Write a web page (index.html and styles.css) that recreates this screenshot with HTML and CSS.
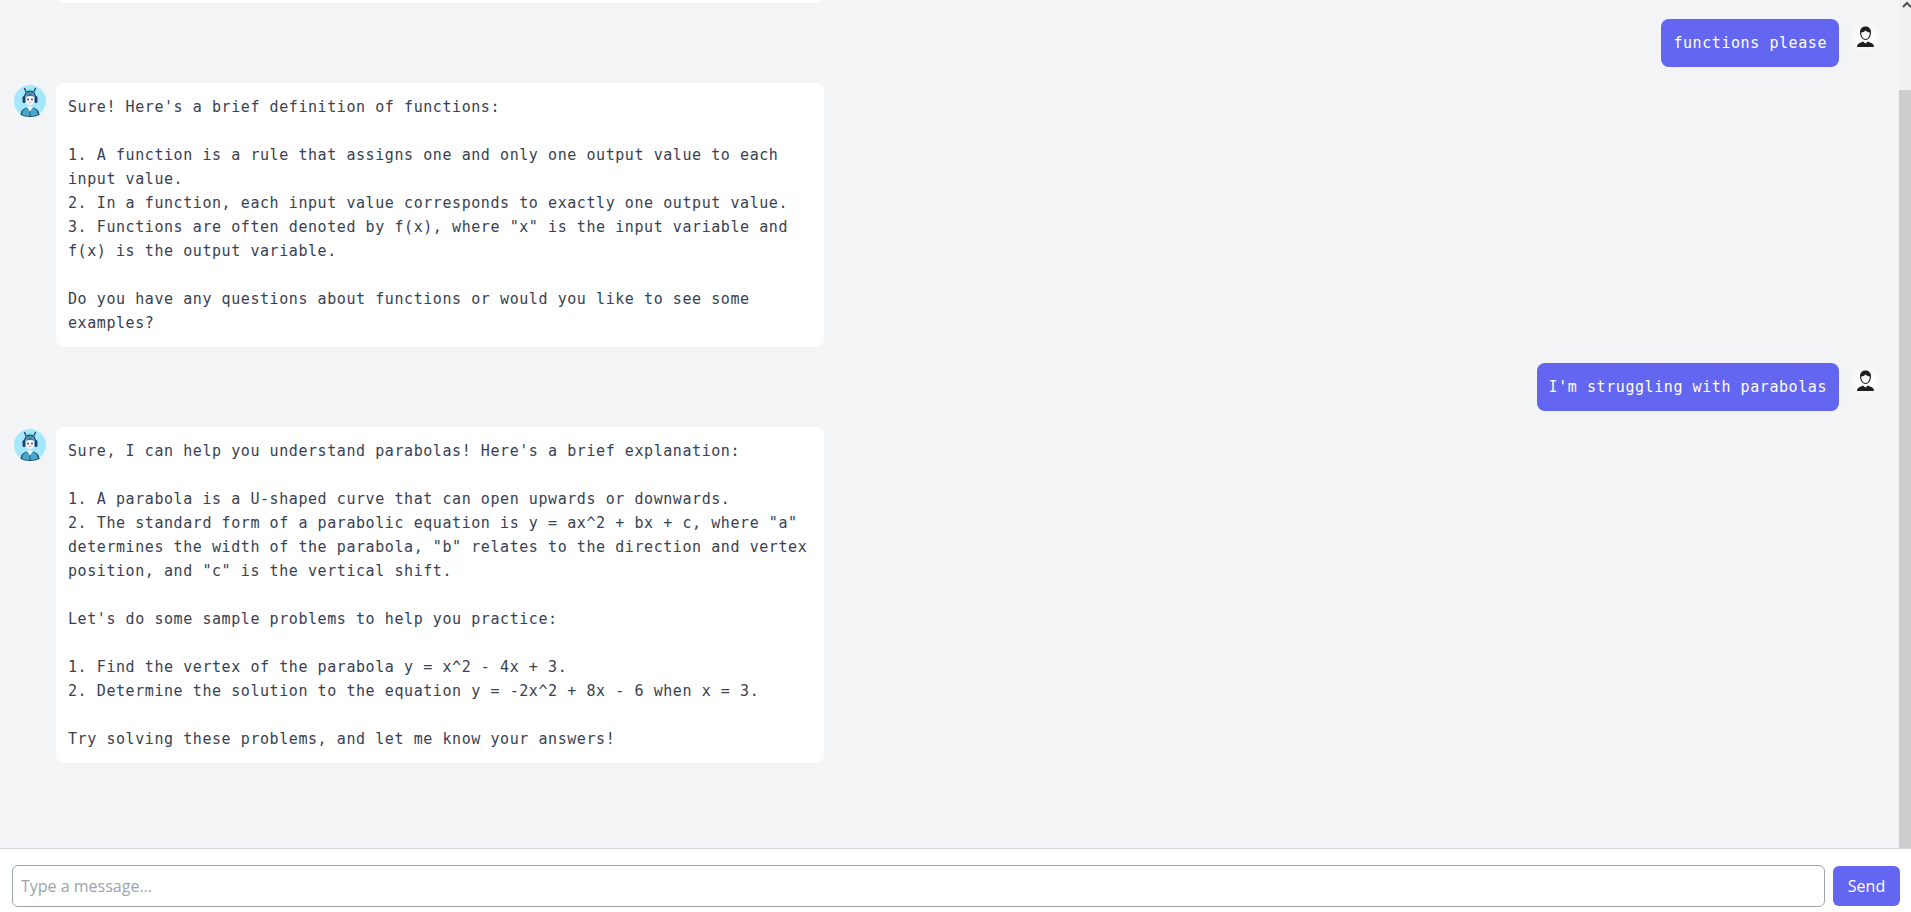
FILE: index.html
```html
<!DOCTYPE html>
<html lang="en">
<head>
    <meta charset="UTF-8">
    <meta name="viewport" content="width=device-width, initial-scale=1.0">
    <title>Chat</title>
    <link rel="stylesheet" href="styles.css">
</head>
<body>
    <svg class="defs" width="0" height="0">
        <defs>
            <radialGradient id="halo">
                <stop offset="0.6" stop-color="#fdfdfd"/>
                <stop offset="1" stop-color="#fdfdfd" stop-opacity="0"/>
            </radialGradient>
        </defs>
        <symbol id="bot" viewBox="0 0 32 32">
            <circle cx="16" cy="16" r="16" fill="#a5e8fb"/>
            <path d="M6.500 30c.3-4.500 3-7.800 9.500-7.800s9.200 3.300 9.500 7.800c-2.700 1.300-6 2-9.500 2s-6.800-.7-9.500-2z" fill="#1d4f82"/>
            <path d="M8 29.500c.5-3.500 2.500-6.200 5-6.500l3 3.500 3-3.500c2.500.3 4.500 3 5 6.500-2.400 1-5 1.500-8 1.500s-5.600-.5-8-1.500z" fill="#4aa6c4"/>
            <path d="M13 22.500l3 4 3-4-1.200-1h-3.600z" fill="#eef9fc"/>
            <path d="M16 26.500v4.500" stroke="#1d4f82" stroke-width="1"/>
            <path d="M10.500 14c-.2-5 2-7.500 5.500-7.500s5.700 2.500 5.500 7.500" fill="none" stroke="#1d3f73" stroke-width="1.500"/>
            <path d="M10.500 3l1.500 4M21.500 3L20 7" stroke="#1d3f73" stroke-width="1.300"/>
            <rect x="13" y="4.500" width="6" height="1.600" rx=".8" fill="#5fd6c4"/>
            <rect x="8.500" y="11" width="3" height="7" rx="1.500" fill="#1d3f73"/>
            <rect x="20.500" y="11" width="3" height="7" rx="1.500" fill="#1d3f73"/>
            <path d="M11.800 11.500c0-2 1.700-3.500 4.200-3.500s4.200 1.500 4.200 3.500v3.500c0 3-1.800 5-4.200 5s-4.200-2-4.200-5z" fill="#fbf5f3"/>
            <path d="M11.800 12c0-2.500 1.700-4 4.200-4s4.200 1.500 4.200 4c-2.600-1.200-5.800-1.200-8.400 0z" fill="#3a7ea8"/>
            <circle cx="14" cy="14.500" r=".9" fill="#1d3f73"/>
            <circle cx="18" cy="14.500" r=".9" fill="#1d3f73"/>
            <path d="M14.800 17.300c.8.500 1.600.5 2.400 0" fill="none" stroke="#b5657a" stroke-width=".7"/>
        </symbol>
        <symbol id="human" viewBox="0 0 32 32">
            <circle cx="16.500" cy="16" r="16" fill="url(#halo)"/>
            <path d="M8 26c0-2.500 1.500-3.500 3.500-4.200l2.500-1.300 2.500 2 2.500-2 2.500 1.300c2 .7 3.500 1.700 3.500 4.200z" fill="#1f1f1f"/>
            <path d="M11 11c0-3.500 2.500-5.500 5.500-5.500s5.500 2 5.500 5.500c0 4-2 8-5.500 8s-5.500-4-5.500-8z" fill="#1f1f1f"/>
            <path d="M12.200 11.500c1.800 0 3.300-.8 4.300-2 1 1.200 2.500 1.800 4.300 2 0 3-1.500 6.500-4.300 6.500s-4.300-3.500-4.300-6.500z" fill="#fafafa"/>
        </symbol>
    </svg>

    <div class="page">
        <main class="chat">
            <div class="msg bot">
                <svg class="avatar"><use href="#bot"/></svg>
                <div class="bubble">&nbsp;</div>
            </div>

            <div class="msg user">
                <div class="bubble">functions please</div>
                <svg class="avatar"><use href="#human"/></svg>
            </div>

            <div class="msg bot">
                <svg class="avatar"><use href="#bot"/></svg>
                <div class="bubble">Sure! Here's a brief definition of functions:

1. A function is a rule that assigns one and only one output value to each input value.
2. In a function, each input value corresponds to exactly one output value.
3. Functions are often denoted by f(x), where "x" is the input variable and f(x) is the output variable.

Do you have any questions about functions or would you like to see some examples?</div>
            </div>

            <div class="msg user">
                <div class="bubble">I'm struggling with parabolas</div>
                <svg class="avatar"><use href="#human"/></svg>
            </div>

            <div class="msg bot">
                <svg class="avatar"><use href="#bot"/></svg>
                <div class="bubble">Sure, I can help you understand parabolas! Here's a brief explanation:

1. A parabola is a U-shaped curve that can open upwards or downwards.
2. The standard form of a parabolic equation is y = ax^2 + bx + c, where "a" determines the width of the parabola, "b" relates to the direction and vertex position, and "c" is the vertical shift.

Let's do some sample problems to help you practice:

1. Find the vertex of the parabola y = x^2 - 4x + 3.
2. Determine the solution to the equation y = -2x^2 + 8x - 6 when x = 3.

Try solving these problems, and let me know your answers!</div>
            </div>
        </main>

        <div class="scrollbar">
            <svg class="arrow" width="12" height="8" viewBox="0 0 12 8"><path d="M4 7l4-4 4 4" fill="none" stroke="#505050" stroke-width="2"/></svg>
            <div class="thumb"></div>
        </div>
    </div>

    <form class="composer">
        <input class="field" type="text" placeholder="Type a message...">
        <button class="send" type="button">Send</button>
    </form>
</body>
</html>
```

FILE: styles.css
```css
* {
    box-sizing: border-box;
}
body {
    margin: 0;
    height: 912px;
    overflow: hidden;
    display: flex;
    flex-direction: column;
    background-color: #f3f4f6;
    color: #374151;
    font-family: "Open Sans", "Noto Sans", sans-serif;
}
.defs {
    position: absolute;
}
.page {
    flex: 1;
    min-height: 0;
    display: flex;
}
.chat {
    flex: 1;
    min-width: 0;
    overflow: hidden;
    display: flex;
    flex-direction: column;
    justify-content: flex-end;
    gap: 16px;
    padding: 0 18px 85px 14px;
}
.msg {
    flex: none;
    display: flex;
    gap: 10px;
}
.msg.user {
    justify-content: flex-end;
}
.avatar {
    flex: none;
    width: 32px;
    height: 32px;
    margin-top: 2px;
}
.bubble {
    padding: 12px;
    border-radius: 8px;
    font-family: "DejaVu Sans Mono", monospace;
    font-size: 15px;
    letter-spacing: 0.57px;
    line-height: 24px;
    white-space: pre-wrap;
}
.bot .bubble {
    width: 768px;
    background-color: white;
}
.user .bubble {
    background-color: #6366f1;
    color: white;
}
.scrollbar {
    flex: none;
    width: 12px;
    display: flex;
    flex-direction: column;
    background-color: #f1f1f1;
}
.arrow {
    display: block;
    flex: none;
    height: 8px;
    margin-bottom: 82px;
}
.thumb {
    flex: 1;
    background-color: #cdcdcd;
}
.composer {
    flex: none;
    height: 64px;
    display: flex;
    align-items: center;
    gap: 8px;
    padding: 16px 11px 5px 12px;
    border-top: 1px solid #d1d5db;
    background-color: white;
}
.field {
    flex: 1;
    height: 42px;
    padding: 0 8px;
    border: 1px solid #9ca3af;
    border-radius: 6px;
    font-family: inherit;
    font-size: 16px;
    color: #374151;
}
.field::placeholder {
    color: #9ca3af;
}
.send {
    flex: none;
    width: 67px;
    height: 40px;
    border: none;
    border-radius: 6px;
    background-color: #6366f1;
    color: white;
    font-family: inherit;
    font-size: 16px;
}
```
